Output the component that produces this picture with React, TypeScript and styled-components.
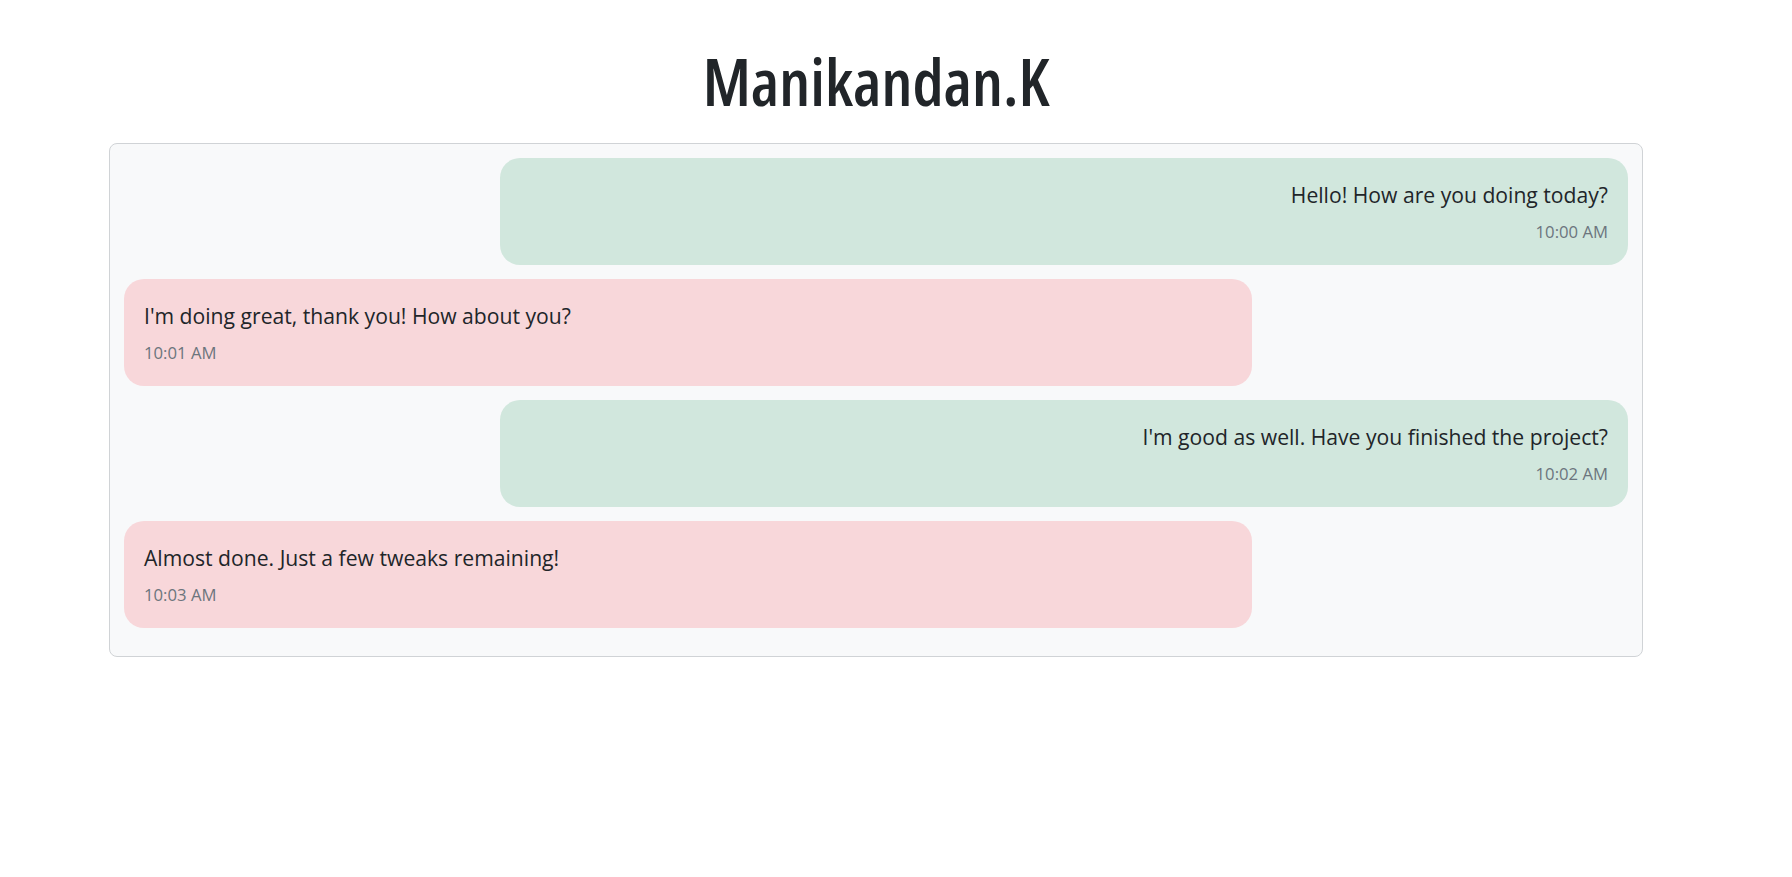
import React from "react";
import styled, { createGlobalStyle } from "styled-components";

const GlobalStyle = createGlobalStyle`
  html, body {
    margin: 0;
    padding: 0;
    background: #ffffff;
  }
  body {
    font-family: "Open Sans", "Noto Sans", "Liberation Sans", sans-serif;
    color: #212529;
  }
`;

const Page = styled.main`
  display: flex;
  flex-direction: column;
  width: 1534px;
  margin-left: 109px;
  padding-top: 42px;
`;

const Title = styled.h1`
  margin: 0 0 23px 0;
  text-align: center;
  font-size: 65px;
  line-height: 78px;
  font-weight: 600;
  font-stretch: condensed;
  color: #212529;
`;

const ChatBox = styled.section`
  display: flex;
  flex-direction: column;
  gap: 14px;
  padding: 14px 14px 28px;
  background: #f8f9fa;
  border: 1px solid #d0d3d6;
  border-radius: 8px;
`;

const Bubble = styled.div<{ $sent: boolean }>`
  align-self: ${(p) => (p.$sent ? "flex-end" : "flex-start")};
  width: 75%;
  box-sizing: border-box;
  padding: 22px 20px 20px;
  border-radius: 20px;
  background: ${(p) => (p.$sent ? "#d1e7dd" : "#f8d7da")};
  text-align: ${(p) => (p.$sent ? "right" : "left")};
`;

const Text = styled.p`
  margin: 0 0 9px 0;
  font-size: 21.15px;
  line-height: 30px;
  color: #212529;
`;

const Time = styled.small`
  display: block;
  font-size: 16.7px;
  line-height: 26px;
  color: #6c757d;
`;

const messages = [
  { text: "Hello! How are you doing today?", time: "10:00 AM", sent: true },
  { text: "I'm doing great, thank you! How about you?", time: "10:01 AM", sent: false },
  { text: "I'm good as well. Have you finished the project?", time: "10:02 AM", sent: true },
  { text: "Almost done. Just a few tweaks remaining!", time: "10:03 AM", sent: false },
];

export default function App() {
  return (
    <>
      <GlobalStyle />
      <Page>
        <Title>Manikandan.K</Title>
        <ChatBox>
          {messages.map((m) => (
            <Bubble key={m.time} $sent={m.sent}>
              <Text>{m.text}</Text>
              <Time>{m.time}</Time>
            </Bubble>
          ))}
        </ChatBox>
      </Page>
    </>
  );
}
